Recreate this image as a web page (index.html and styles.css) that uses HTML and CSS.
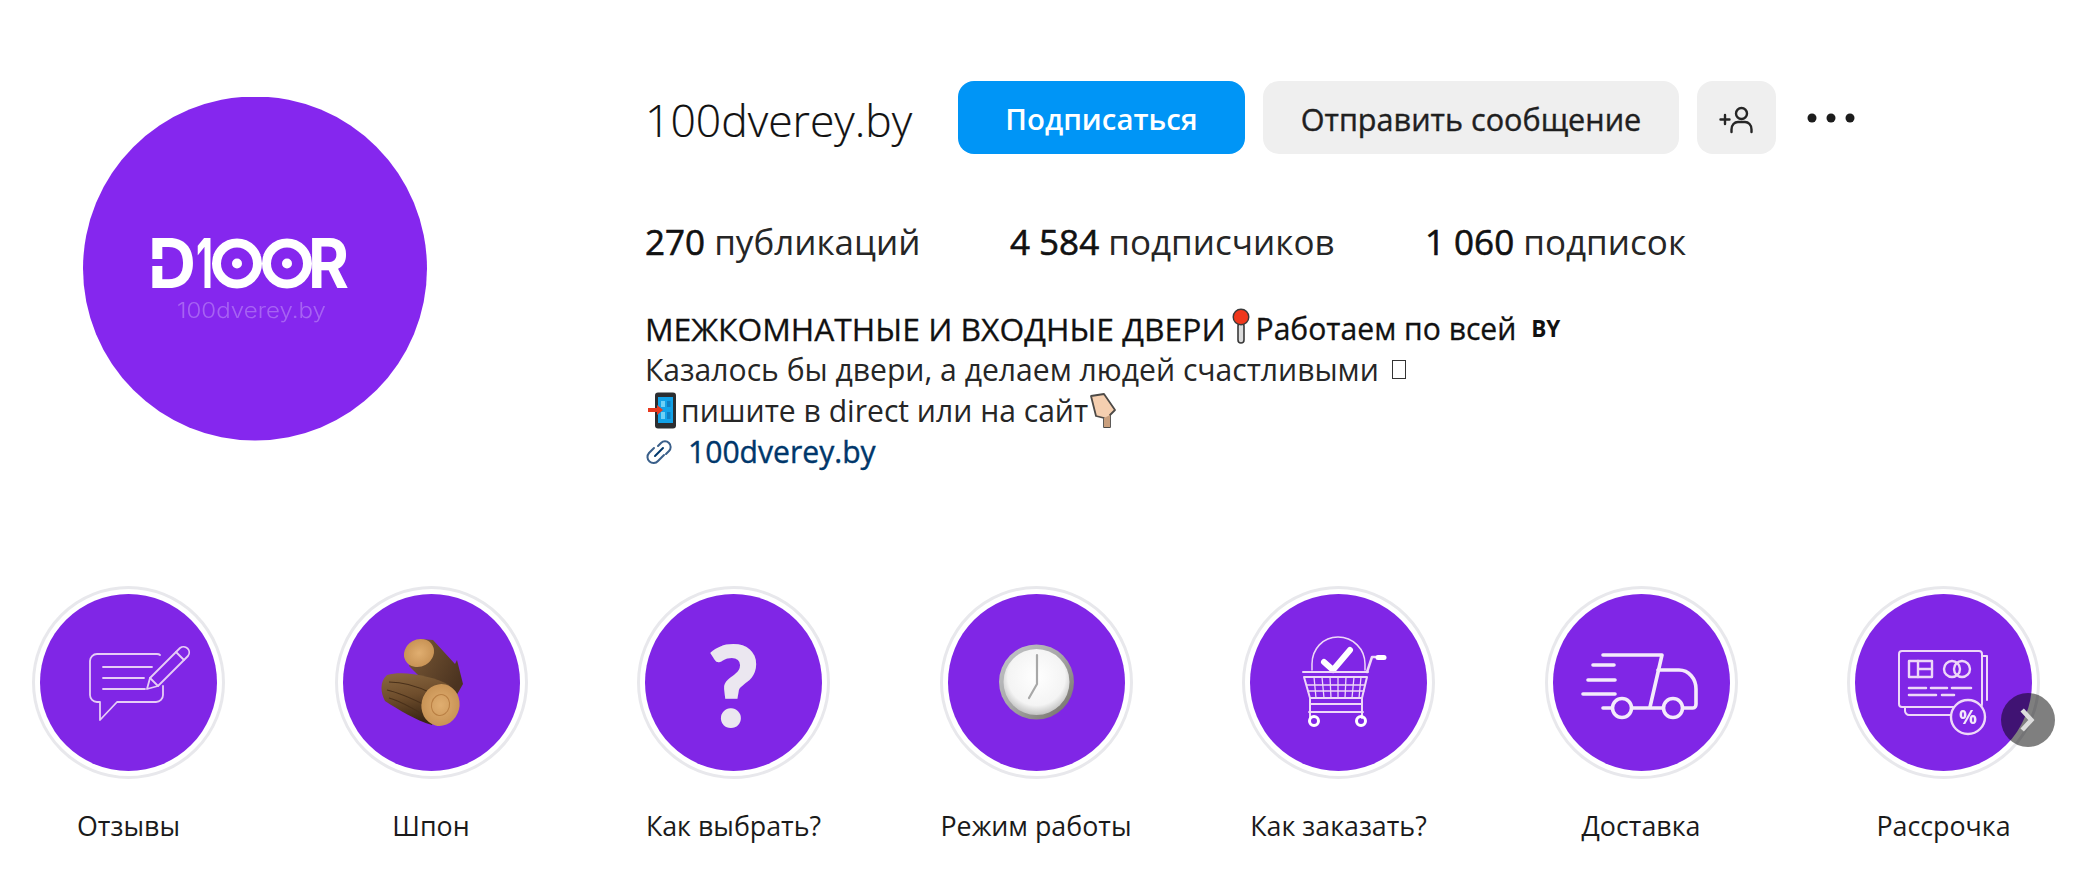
FILE: index.html
```html
<!DOCTYPE html>
<html lang="ru">
<head>
<meta charset="utf-8">
<title>100dverey.by</title>
<link rel="stylesheet" href="styles.css">
</head>
<body>
<main class="page">
  <header class="profile">
    <svg class="avatar" viewBox="83 97 344 344" aria-label="D100R логотип">
      <circle cx="255" cy="268.500" r="172" fill="#8527ee"/>
      <g class="logo-soft">
        <text x="148" y="288" class="logo-letter" textLength="48" lengthAdjust="spacingAndGlyphs">D</text>
        <rect x="146" y="259" width="24" height="7" fill="#8527ee"/>
        <text x="196" y="288" class="logo-letter" textLength="17" lengthAdjust="spacingAndGlyphs">1</text>
        <circle cx="237" cy="263.500" r="20.500" fill="none" stroke="#fff" stroke-width="9"/>
        <circle cx="237" cy="263.500" r="5" fill="#fff"/>
        <circle cx="287" cy="263.500" r="20.500" fill="none" stroke="#fff" stroke-width="9"/>
        <circle cx="287" cy="263.500" r="5" fill="#fff"/>
        <text x="308" y="288" class="logo-letter" textLength="41" lengthAdjust="spacingAndGlyphs">R</text>
        <text x="177" y="318" class="logo-sub" textLength="149" lengthAdjust="spacingAndGlyphs">100dverey.by</text>
      </g>
    </svg>
    <section class="info">
      <div class="title-row">
        <h1 class="name">100dverey.by</h1>
        <div class="actions">
          <button class="btn btn-primary">Подписаться</button>
          <button class="btn btn-muted">Отправить сообщение</button>
          <button class="btn btn-muted btn-icon" aria-label="Подписаться на похожие">
            <svg class="icon-add" viewBox="0 0 40 40" fill="none" stroke="#262626" stroke-width="2.400" stroke-linecap="round">
              <path d="M3.500 20.500h9M8 16v9"/>
              <circle cx="24.500" cy="14.500" r="5.500"/>
              <path d="M14.500 33v-2.500c0-4.500 3-7.500 6.500-7.500h7c3.500 0 6.500 3 6.500 7.500V33"/>
            </svg>
          </button>
          <svg class="icon-more" viewBox="0 0 48 10" aria-label="Ещё">
            <circle cx="5" cy="5" r="4.500" fill="#1c1c1c"/>
            <circle cx="24" cy="5" r="4.500" fill="#1c1c1c"/>
            <circle cx="43" cy="5" r="4.500" fill="#1c1c1c"/>
          </svg>
        </div>
      </div>
      <ul class="stats">
        <li class="stat stat-posts"><b>270</b> публикаций</li>
        <li class="stat stat-followers"><b>4 584</b> подписчиков</li>
        <li class="stat"><b>1 060</b> подписок</li>
      </ul>
      <div class="bio">
        <p class="bio-line bio-title">МЕЖКОМНАТНЫЕ И ВХОДНЫЕ ДВЕРИ<svg class="emoji emoji-pin" viewBox="0 0 18 36"><rect x="6" y="15" width="6" height="20" rx="3" fill="#dcdcdc" stroke="#3a3a3a" stroke-width="1.600"/><circle cx="9" cy="9" r="7.800" fill="#f0381c" stroke="#3a3a3a" stroke-width="1.400"/></svg><span class="bio-title-rest">Работаем по всей </span><span class="flag">BY</span></p>
        <p class="bio-line">Казалось бы двери, а делаем людей счастливыми <span class="tofu"></span></p>
        <p class="bio-line bio-direct"><svg class="emoji emoji-phone" viewBox="0 0 28 37"><rect x="7" y="0.500" width="21" height="36" rx="3" fill="#2b2e31"/><rect x="10" y="5" width="15" height="26" fill="#12a2e8"/><rect x="13" y="9" width="4" height="6" fill="#6fd0f5"/><rect x="19" y="9" width="3.500" height="6" fill="#0f7fc4"/><rect x="13" y="20" width="4" height="7" fill="#6fd0f5"/><rect x="19" y="20" width="3.500" height="7" fill="#0f7fc4"/><path d="M0 18h13" stroke="#e8391f" stroke-width="4"/><path d="M9 13l6 5-6 5z" fill="#e8391f"/></svg>пишите в direct или на сайт<svg class="emoji emoji-hand" viewBox="0 0 26 37"><path d="M1 4 14 2 25 18 20 23V35H14V26L6 24z" fill="#f5cfb0" stroke="#4d4a47" stroke-width="1.800" stroke-linejoin="round"/><path d="M14 26v9h6V23z" fill="#c99f7d"/></svg></p>
        <p class="bio-line bio-link"><svg class="icon-link" viewBox="0 0 27 26" fill="none" stroke="#3a5f8a" stroke-width="2" stroke-linecap="round"><path d="M13 7l3-3a5.500 5.500 0 0 1 8 8l-3 3"/><path d="M19 16l-6 6a6 6 0 0 1-9-8l5-5"/><path d="M10 17l8-8" stroke="#00376b"/></svg><a class="link" href="#">100dverey.by</a></p>
      </div>
    </section>
  </header>

  <section class="highlights">
    <article class="story">
      <div class="ring"><div class="disc">
        <svg class="art" viewBox="0 0 177 177" fill="none" stroke="#e6cdf6" stroke-width="1.800" stroke-linecap="round" stroke-linejoin="round">
          <path d="M120 61c-1-1-2-1-3-1H57a7 7 0 0 0-7 7v34a7 7 0 0 0 7 7h3v18l17-18h39a7 7 0 0 0 7-7v-9"/>
          <path d="M63 73h49M63 84h41M63 95h42"/>
          <path d="M107 95l3-11 30-30a5.700 5.700 0 0 1 8 8l-30 30z"/>
          <path d="M110 84l8 8M136 58l8 8"/>
        </svg>
      </div></div>
      <p class="label">Отзывы</p>
    </article>
    <article class="story">
      <div class="ring"><div class="disc">
        <svg class="art" viewBox="0 0 177 177">
          <defs>
            <linearGradient id="bark" x1="0" y1="0" x2="0.250" y2="1"><stop offset="0" stop-color="#8a6840"/><stop offset=".5" stop-color="#6e4d2c"/><stop offset="1" stop-color="#3a2614"/></linearGradient>
            <linearGradient id="barkBack" x1="0" y1="0" x2="1" y2="0.600"><stop offset="0" stop-color="#7b5a36"/><stop offset="1" stop-color="#4b3320"/></linearGradient>
            <radialGradient id="cut" cx=".5" cy=".5" r=".6"><stop offset="0" stop-color="#e0ae70"/><stop offset="1" stop-color="#c48e50"/></radialGradient>
          </defs>
          <path d="M78 45 90 46 112 70 114 66 120 90 112 104 90 96 66 72z" fill="url(#barkBack)"/>
          <ellipse cx="76" cy="59" rx="15.500" ry="13.500" transform="rotate(-30 76 59)" fill="url(#cut)"/>
          <path d="M44 81C60 76 90 82 106 91L89 131C72 126 56 116 42 107 37 98 37 87 44 81z" fill="url(#bark)"/>
          <path d="M46 88c16 0 30 5 42 11M44 96c14 3 28 10 40 16M46 104c12 3 22 10 34 16" stroke="#49301a" stroke-width="1.100" fill="none"/>
          <ellipse cx="97.500" cy="111" rx="19" ry="21" transform="rotate(14 97.500 111)" fill="url(#cut)"/>
          <ellipse cx="97.500" cy="111" rx="9" ry="10.500" transform="rotate(14 97.500 111)" fill="none" stroke="#b97f43" stroke-width="1"/>
        </svg>
      </div></div>
      <p class="label">Шпон</p>
    </article>
    <article class="story">
      <div class="ring"><div class="disc"><span class="question">?</span></div></div>
      <p class="label">Как выбрать?</p>
    </article>
    <article class="story">
      <div class="ring"><div class="disc">
        <svg class="art" viewBox="0 0 177 177">
          <defs>
            <linearGradient id="rim" x1="0" y1="0" x2="1" y2="1"><stop offset="0" stop-color="#c6c8cc"/><stop offset=".5" stop-color="#a5a5a5"/><stop offset="1" stop-color="#6e6a62"/></linearGradient>
            <radialGradient id="face" cx=".5" cy=".42" r=".62"><stop offset="0" stop-color="#fff"/><stop offset=".7" stop-color="#f4f4f4"/><stop offset="1" stop-color="#b5b5b5"/></radialGradient>
          </defs>
          <circle cx="88.500" cy="88" r="37.500" fill="url(#rim)"/>
          <circle cx="88.500" cy="88" r="33" fill="url(#face)"/>
          <path d="M89 61v29l-8 14" stroke="#a8a8a8" stroke-width="2.200" fill="none" stroke-linecap="round"/>
        </svg>
      </div></div>
      <p class="label">Режим работы</p>
    </article>
    <article class="story">
      <div class="ring"><div class="disc">
        <svg class="art" viewBox="0 0 177 177" fill="none" stroke="#eed8f8" stroke-width="1.500" stroke-linecap="round" stroke-linejoin="round">
          <path d="M62 76V70c0-15 11-27 26-27s27 12 27 27v6"/>
          <path d="M74 68l9 8 17-20" stroke="#fff" stroke-width="6"/>
          <path d="M117 78l5-15h10" stroke-width="2.500"/>
          <path d="M128 63.500h6" stroke="#fff" stroke-width="5"/>
          <path d="M53 78h65M54 83h63l-5 21H60zM61 110h50M59 118h54M60 104v20M112 104v20" stroke-width="2"/>
          <path d="M57 91h58M58 97h56M64 83l2 21M72 83l2 21M80 83l1 21M88 83v21M96 83l-1 21M104 83l-2 21M111 83l-2 21" stroke-width="1.300"/>
          <circle cx="64" cy="127" r="4.500" stroke="#fff" stroke-width="3"/>
          <circle cx="111" cy="127" r="4.500" stroke="#fff" stroke-width="3"/>
        </svg>
      </div></div>
      <p class="label">Как заказать?</p>
    </article>
    <article class="story">
      <div class="ring"><div class="disc">
        <svg class="art" viewBox="0 0 177 177" fill="none" stroke="#f4ebfb" stroke-width="3.600" stroke-linecap="round" stroke-linejoin="round">
          <path d="M50 61h59L97 113"/>
          <path d="M105 76h21c10 0 17 9 17 19v15c0 2-1 4-3 4h-9"/>
          <path d="M80 114h30"/>
          <circle cx="69" cy="114" r="9.500"/>
          <circle cx="120" cy="114" r="9.500"/>
          <path d="M40 71h21M35 86h27M30 100h32M50 114h9"/>
        </svg>
      </div></div>
      <p class="label">Доставка</p>
    </article>
    <article class="story">
      <div class="ring"><div class="disc">
        <svg class="art" viewBox="0 0 177 177" fill="none" stroke="#eed8f8" stroke-width="2" stroke-linecap="round" stroke-linejoin="round">
          <rect x="44" y="57" width="83" height="56" rx="3"/>
          <path d="M127 62h5v44M50 113v4c0 2 2 4 4 4h42"/>
          <rect x="54" y="67" width="23" height="16" stroke-width="2.400"/>
          <path d="M63 67v16M63 75h14" stroke-width="2.400"/>
          <circle cx="97" cy="75" r="8" stroke-width="2.400"/>
          <circle cx="107" cy="75" r="8" stroke-width="2.400"/>
          <path d="M54 94h17M76 94h16M97 94h19M54 101h27M87 101h12" stroke-width="2.600"/>
          <circle cx="113" cy="123" r="17" fill="#8026e6" stroke-width="2.400"/>
          <text x="113" y="130" class="percent">%</text>
        </svg>
      </div></div>
      <p class="label">Рассрочка</p>
    </article>
    <button class="next" aria-label="Далее">
      <svg class="next-icon" viewBox="0 0 24 32" fill="none" stroke="#ddd" stroke-width="5.500" stroke-linejoin="miter"><path d="M5 4l11 12L5 28"/></svg>
    </button>
  </section>
</main>
</body>
</html>
```

FILE: styles.css
```css
* { box-sizing: border-box; }
html, body { margin: 0; padding: 0; background: #fff; }
body {
  width: 2086px;
  height: 874px;
  overflow: hidden;
  font-family: "Open Sans", "Noto Sans", sans-serif;
  color: #262626;
}
.page { position: relative; padding-top: 81px; }

.profile { display: flex; align-items: flex-start; padding-left: 83px; height: 505px; }
.avatar { width: 344px; height: 344px; margin-top: 16px; flex: none; }
.logo-soft { filter: blur(.5px); }
.logo-letter { font-family: "Inter", sans-serif; font-weight: 700; font-size: 69px; fill: #fff; }
.logo-sub { font-family: "Inter", sans-serif; font-weight: 300; font-size: 21px; fill: rgba(255,255,255,.28); }

.info { margin-left: 218px; flex: 1; }
.title-row { display: flex; align-items: center; height: 73px; }
.name { margin: 0; width: 313px; flex: none; padding-top: 3px; font-size: 44.500px; font-weight: 300; color: #111; white-space: nowrap; -webkit-text-stroke: .2px #111; }
.actions { display: flex; align-items: center; gap: 18px; }
.btn { height: 73px; border: 0; border-radius: 16px; font-family: inherit; padding: 2px 0 0; }
.btn-primary { width: 287px; background: #0095f6; color: #fff; font-weight: 600; font-size: 29.400px; }
.btn-muted { width: 416px; background: #efefef; color: #1f1f1f; font-weight: 400; font-size: 30.600px; -webkit-text-stroke: .4px #1f1f1f; }
.btn-icon { width: 79px; display: flex; align-items: center; justify-content: center; }
.icon-add { width: 40px; height: 40px; }
.icon-more { width: 48px; height: 10px; margin-left: 13px; }

.stats { display: flex; list-style: none; margin: 67px 0 0; padding: 0; font-size: 35px; line-height: 42px; }
.stat { white-space: nowrap; }
.stat b { font-weight: 400; color: #111; -webkit-text-stroke: .6px #111; }
.stat-posts { width: 365px; }
.stat-followers { width: 415px; }

.bio { margin-top: 45px; font-size: 30.100px; line-height: 41px; }
.bio-line { margin: 0; display: flex; align-items: center; height: 41px; white-space: pre; }
.bio-title { font-size: 31.800px; color: #111; -webkit-text-stroke: .3px #111; }
.bio-title-rest { font-size: 30.100px; }
.emoji { flex: none; }
.emoji-pin { width: 18px; height: 36px; margin: 0 6px 0 6px; position: relative; top: -3px; }
.emoji-phone { width: 28px; height: 37px; margin: 0 5px 0 3px; }
.emoji-hand { width: 26px; height: 37px; margin-left: 2px; }
.flag { font-size: 22.500px; font-weight: 700; margin-left: 7px; -webkit-text-stroke: 0; }
.tofu { display: inline-block; width: 14px; height: 19px; margin-left: 5px; border: 1.500px solid #333; }
.icon-link { width: 27px; height: 26px; margin-right: 16px; flex: none; }
.link { color: #00376b; font-weight: 400; text-decoration: none; -webkit-text-stroke: .4px #00376b; }

.highlights { position: relative; display: flex; gap: 109.500px; padding-left: 32px; }
.story { flex: none; width: 193px; }
.ring { width: 193px; height: 193px; padding: 5px; border: 3px solid #e8e8ec; border-radius: 50%; }
.disc { width: 100%; height: 100%; border-radius: 50%; background: #8026e6; display: flex; align-items: center; justify-content: center; }
.art { width: 177px; height: 177px; display: block; filter: blur(.35px); }
.question { font-family: "Lato", sans-serif; font-weight: 900; font-size: 110px; line-height: 1; color: #ebe7f0; -webkit-text-stroke: 2px #ebe7f0; }
.percent { font-family: "Open Sans", sans-serif; font-size: 20px; font-weight: 700; fill: #f4e8fb; stroke: none; text-anchor: middle; }
.label { margin: 31px -20px 0; text-align: center; font-size: 26.800px; line-height: 32px; color: #1a1a1a; white-space: nowrap; }
.next { position: absolute; left: 2001px; top: 107px; width: 54px; height: 54px; padding: 0; border: 0; border-radius: 50%; background: rgba(0,0,0,.5); display: flex; align-items: center; justify-content: center; }
.next-icon { width: 20px; height: 28px; }
```
